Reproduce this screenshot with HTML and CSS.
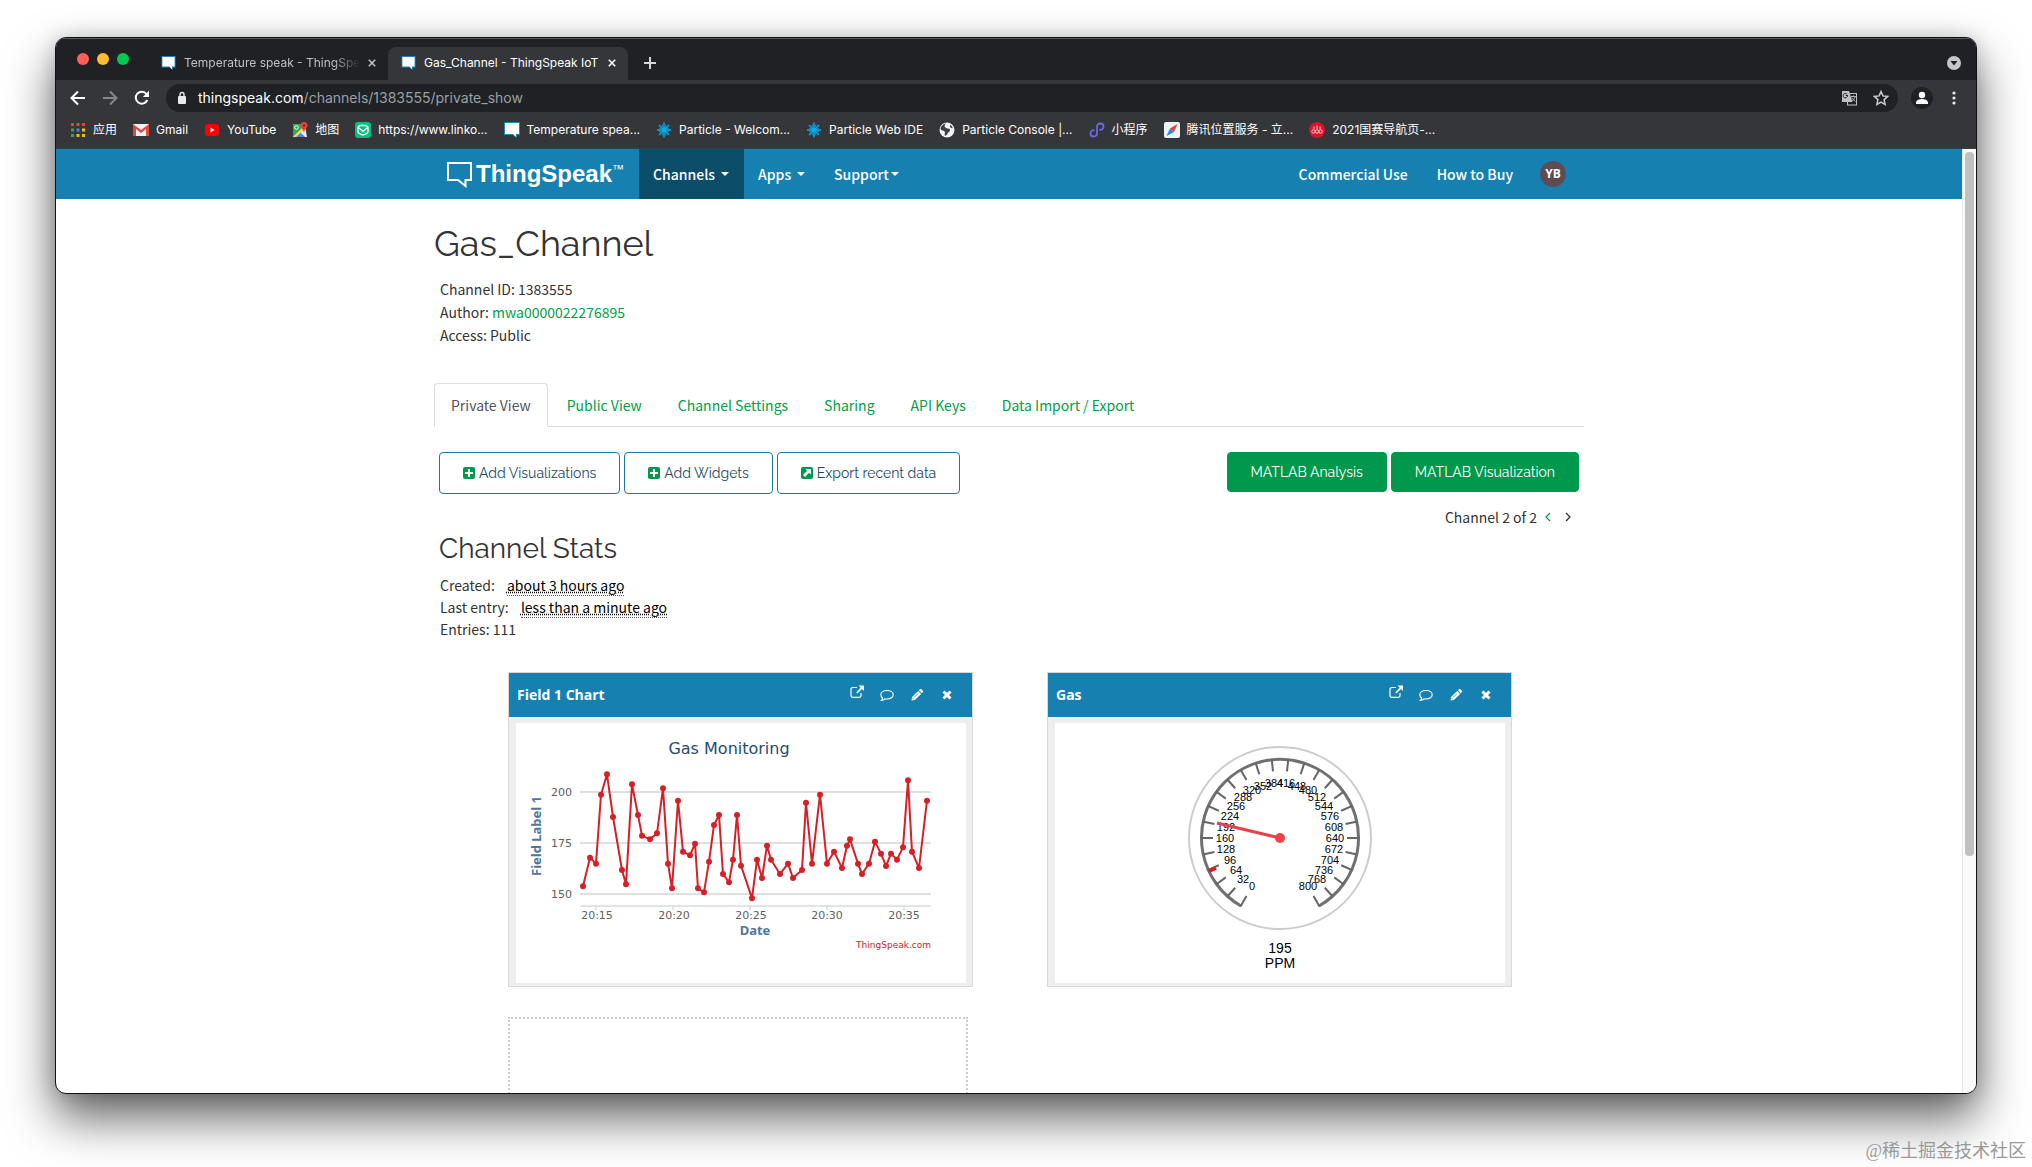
FILE: index.html
```html
<!DOCTYPE html>
<html lang="en">
<head>
<meta charset="utf-8">
<title>Gas_Channel - ThingSpeak IoT</title>
<link rel="stylesheet" href="styles.css">
</head>
<body>
<svg class="defs" aria-hidden="true">
  <symbol id="ts" viewBox="0 0 16 16"><path d="M0 0h16v13h-3v3l-4-3H0z" fill="#1b86b8"/><path d="M1 1h14v11h-3v3l-3-3H1z" fill="#fff"/></symbol>
  <symbol id="close" viewBox="0 0 10 10"><path d="M1 1l8 8M9 1L1 9" stroke="currentColor" stroke-width="2"/></symbol>
  <symbol id="spark" viewBox="0 0 16 16"><path d="M8 .5v15M1 8h14M3 3l10 10M13 3L3 13" stroke="#00aeef" stroke-width="1.400"/><path d="M6 2.500l4 11M10 2.500l-4 11M3 6l10 4M13 6L3 10" stroke="#00aeef" stroke-width=".8"/></symbol>
  <symbol id="plus-box" viewBox="0 0 12 12"><rect width="12" height="12" rx="2" fill="#00984c"/><path d="M6 2v8M2 6h8" stroke="#fff" stroke-width="2"/></symbol>
  <symbol id="arrow-box" viewBox="0 0 12 12"><rect width="12" height="12" rx="2" fill="#00984c"/><path d="M4.500 2H10v5.500L8.200 5.800 4 10 2 8l4.200-4.200z" fill="#fff"/></symbol>
  <symbol id="external" viewBox="0 0 14 14"><path d="M7 2.500H3A1.800 1.800 0 0 0 1 4.500v6A1.800 1.800 0 0 0 3 12.300h6a1.800 1.800 0 0 0 2-1.800V8" fill="none" stroke="currentColor" stroke-width="1.200"/><path d="M8.500.5H14V6l-2-1.900-4.600 4.500-1.200-1.200 4.500-4.600z" fill="currentColor"/></symbol>
  <symbol id="comment" viewBox="0 0 14 14"><path d="M7 2.500c3.500 0 6.200 1.800 6.200 4.200S10.500 11 7 11c-.7 0-1.400 0-2-.2-.9.900-2.100 1.500-3.600 1.600.7-.7 1.100-1.400 1.200-2.400C1.500 9.200.8 8 .8 6.700.8 4.300 3.500 2.500 7 2.500z" fill="none" stroke="currentColor" stroke-width="1.100"/></symbol>
  <symbol id="pencil" viewBox="0 0 14 14"><path d="M1.500 12.500l.6-3.400 6.100-6.100 2.900 2.900-6.200 6.100zM8.900 2.300l1-1c.5-.5 1-.5 1.500 0l1.400 1.400c.5.500.5 1 0 1.500l-1 1z" fill="currentColor"/><path d="M4 9.500l4-4M2.600 10.200l1.300 1.300" stroke="#1681b1" stroke-width=".8"/></symbol>
  <symbol id="times" viewBox="0 0 14 14"><path d="M3.500 3.500l7 7M10.500 3.500l-7 7" stroke="currentColor" stroke-width="3"/></symbol>
</svg>

<div class="window">
  <header class="chrome">
    <div class="tabstrip">
      <div class="lights"><i class="light red"></i><i class="light yellow"></i><i class="light green"></i></div>
      <div class="tab"><svg class="favicon"><use href="#ts"/></svg><span class="tab-title fade">Temperature speak - ThingSpeak IoT</span><button class="plain" aria-label="Close tab"><svg class="x"><use href="#close"/></svg></button></div>
      <div class="tab current"><svg class="favicon"><use href="#ts"/></svg><span class="tab-title">Gas_Channel - ThingSpeak IoT</span><button class="plain" aria-label="Close tab"><svg class="x"><use href="#close"/></svg></button></div>
      <button class="plain new-tab" aria-label="New tab"><svg width="12" height="12" viewBox="0 0 12 12"><path d="M6 0v12M0 6h12" stroke="#d5d7da" stroke-width="2"/></svg></button>
      <button class="plain tab-search" aria-label="Search tabs"><svg width="16" height="16" viewBox="0 0 16 16"><circle cx="8" cy="8" r="7" fill="#c4c7cb"/><path d="M4.500 6h7L8 10.500z" fill="#202124"/></svg></button>
    </div>
    <div class="toolbar">
      <button class="plain" aria-label="Back"><svg width="16" height="16" viewBox="0 0 16 16"><path d="M15 8H2M8 1.500L1.500 8 8 14.500" fill="none" stroke="#fff" stroke-width="2"/></svg></button>
      <button class="plain" aria-label="Forward"><svg width="16" height="16" viewBox="0 0 16 16"><path d="M1 8h13M8 1.500L14.500 8 8 14.500" fill="none" stroke="#85878a" stroke-width="2"/></svg></button>
      <button class="plain" aria-label="Reload"><svg width="16" height="16" viewBox="0 0 16 16"><path d="M13.300 10A6 6 0 1 1 12.500 4" fill="none" stroke="#fff" stroke-width="2"/><path d="M15 .8V7H8.800z" fill="#fff"/></svg></button>
      <div class="address">
        <svg width="10" height="14" viewBox="0 0 10 14"><rect x="1" y="5" width="8" height="8" rx="1" fill="#e8eaed"/><path d="M3 6V3.500a2 2 0 0 1 4 0V6" fill="none" stroke="#e8eaed" stroke-width="1.400"/></svg>
        <span class="url"><b>thingspeak.com</b>/channels/1383555/private_show</span>
        <button class="plain" aria-label="Translate"><svg width="16" height="16" viewBox="0 0 16 16"><rect x="6.500" y="3.500" width="9" height="11.500" fill="none" stroke="#bdc1c6"/><path d="M1 1h7l3.500 11H1z" fill="#bdc1c6"/><path d="M7 5.500H4.800M6.500 5.700A2.200 2.200 0 1 1 6 4.300" fill="none" stroke="#202124"/><path d="M10 6.500h5M12.500 5.500v1M14 7c-.5 2-2 3.500-3.500 4.500M11 7.500c.8 1.800 2 3 3.500 4" fill="none" stroke="#bdc1c6" stroke-width=".9"/></svg></button>
        <button class="plain" aria-label="Bookmark"><svg width="16" height="16" viewBox="0 0 16 16"><path d="M8 1.500l1.900 4.400 4.800.5-3.600 3.200 1 4.800L8 12l-4.100 2.400 1-4.800L1.300 6.400l4.800-.5z" fill="none" stroke="#c8cacd" stroke-width="1.500"/></svg></button>
      </div>
      <button class="plain profile" aria-label="Profile"><svg width="24" height="24" viewBox="0 0 24 24"><circle cx="12" cy="12" r="11" fill="#202124"/><circle cx="12" cy="9" r="3.200" fill="#fff"/><path d="M6 18v-1.500c0-2.500 4-3.500 6-3.500s6 1 6 3.500V18z" fill="#fff"/></svg></button>
      <button class="plain menu" aria-label="Menu"><svg width="4" height="16" viewBox="0 0 4 16"><g fill="#e8eaed"><circle cx="2" cy="3" r="1.600"/><circle cx="2" cy="8" r="1.600"/><circle cx="2" cy="13" r="1.600"/></g></svg></button>
    </div>
    <nav class="bookmarks">
      <a href="#"><svg viewBox="0 0 16 16"><g fill="#ea4335"><path d="M1 1h3v3H1zM6.500 1h3v3h-3zM12 1h3v3h-3z"/></g><path d="M1 6.500h3v3H1z" fill="#34a853"/><path d="M6.500 6.500h3v3h-3z" fill="#4285f4"/><path d="M12 6.500h3v3h-3zM6.500 12h3v3h-3zM12 12h3v3h-3z" fill="#fbbc04"/><path d="M1 12h3v3H1z" fill="#34a853"/></svg>应用</a>
      <a href="#"><svg viewBox="0 0 16 16"><path d="M0 2h16v12H0z" fill="#f2f2f2"/><path d="M0 14V2l8 6 8-6v12h-3V7l-5 4-5-4v7z" fill="#dd4b3e"/></svg>Gmail</a>
      <a href="#"><svg viewBox="0 0 16 16"><rect x="1" y="2" width="14" height="12" rx="3" fill="#f00"/><path d="M6.500 5.500v5l4-2.500z" fill="#fff"/></svg>YouTube</a>
      <a href="#"><svg viewBox="0 0 16 16"><path d="M1 2h13v13H1z" fill="#34a853"/><path d="M1 15L13 4l2 11z" fill="#e8eaed"/><path d="M3 15l5-5 5 5z" fill="#4285f4"/><path d="M1 15L12 4l2 2L4 15z" fill="#fbd75b"/><circle cx="4.500" cy="5.500" r="1.800" fill="none" stroke="#fff"/><path d="M12 0a3.500 3.500 0 0 1 3.500 3.500C15.500 6 12 8 12 11c0-3-3.500-5-3.500-7.500A3.500 3.500 0 0 1 12 0z" fill="#ea4335"/><circle cx="12" cy="3.500" r="1.200" fill="#8c1d18"/></svg>地图</a>
      <a href="#"><svg viewBox="0 0 16 16"><rect width="16" height="16" rx="3" fill="#07c07e"/><path d="M3 5l2-1.500h6L13 5v4.500c0 2-3 3-5 3.500-2-.5-5-1.500-5-3.500zM3.500 5.500L8 9.500l4.500-4" fill="none" stroke="#fff" stroke-width="1.300"/></svg>https://www.linko...</a>
      <a href="#"><svg><use href="#ts"/></svg>Temperature spea...</a>
      <a href="#"><svg><use href="#spark"/></svg>Particle - Welcom...</a>
      <a href="#"><svg><use href="#spark"/></svg>Particle Web IDE</a>
      <a href="#"><svg viewBox="0 0 16 16"><circle cx="8" cy="8" r="7.500" fill="#f1f3f4"/><path d="M7 1.500C5 3 5 5 7 6s4 0 4 2-2 2-2.500 3.500S7 14 6 13.500 7 10 5 9 1.500 8 1.500 7 3 2 7 1.500zM11 3c1 0 2 1 2.500 2.500S12 6 11 5z" fill="#3c4043"/></svg>Particle Console |...</a>
      <a href="#"><svg viewBox="0 0 16 16"><path d="M5.500 8.500C3 7.500 1.500 9.500 1.500 11.500s1.500 3 3 3c2.500 0 3.500-1.500 3.500-3.500V5c0-2 1-3.500 3.500-3.500 1.500 0 3 1 3 3s-1.500 4-4 3" fill="none" stroke="#6c67e8" stroke-width="1.800"/></svg>小程序</a>
      <a href="#"><svg viewBox="0 0 16 16"><rect width="16" height="16" rx="2" fill="#eaf3f8"/><path d="M13.500 2L10 10 6 6.500z" fill="#e8402f"/><path d="M2.500 14L6 6.500l4 3.500z" fill="#2389df"/></svg>腾讯位置服务 - 立...</a>
      <a href="#"><svg viewBox="0 0 16 16"><circle cx="8" cy="8" r="8" fill="#d9142b"/><g fill="none" stroke="#ffc9cf"><circle cx="4.500" cy="9.500" r="1.700"/><circle cx="8" cy="9.500" r="1.700"/><circle cx="11.500" cy="9.500" r="1.700"/><path d="M5 7V4.500M8 7V3.500M11 7V4.500"/></g></svg>2021国赛导航页-...</a>
    </nav>
  </header>

  <div class="viewport">
    <div class="page">
      <nav class="navbar">
        <div class="container nav-row">
          <a class="brand" href="#"><svg width="25" height="26" viewBox="0 0 25 26"><path d="M1 1h23v17h-5.500v6L11 18H1z" fill="none" stroke="#fff" stroke-width="2"/></svg><span>ThingSpeak<sup>™</sup></span></a>
          <a class="nav-link on" href="#">Channels <i class="caret"></i></a>
          <a class="nav-link" href="#">Apps <i class="caret"></i></a>
          <a class="nav-link tight" href="#">Support<i class="caret"></i></a>
          <a class="nav-link first-right" href="#">Commercial Use</a>
          <a class="nav-link" href="#">How to Buy</a>
          <a class="avatar" href="#">YB</a>
        </div>
      </nav>

      <main class="container">
        <h1>Gas_Channel</h1>
        <div class="meta">
          <div>Channel ID: 1383555</div>
          <div>Author: <a href="#">mwa0000022276895</a></div>
          <div>Access: Public</div>
        </div>

        <nav class="tabs">
          <a class="active" href="#">Private View</a>
          <a href="#">Public View</a>
          <a href="#">Channel Settings</a>
          <a href="#">Sharing</a>
          <a href="#">API Keys</a>
          <a href="#">Data Import / Export</a>
        </nav>

        <div class="actions">
          <button class="btn outline"><svg><use href="#plus-box"/></svg>Add Visualizations</button>
          <button class="btn outline"><svg><use href="#plus-box"/></svg>Add Widgets</button>
          <button class="btn outline"><svg><use href="#arrow-box"/></svg>Export recent data</button>
          <button class="btn solid push">MATLAB Analysis</button>
          <button class="btn solid">MATLAB Visualization</button>
        </div>
        <div class="pager">Channel 2 of 2
          <a href="#" aria-label="Previous channel"><svg width="6" height="10" viewBox="0 0 6 10"><path d="M5 1L1 5l4 4" fill="none" stroke="currentColor" stroke-width="1.300"/></svg></a>
          <span class="next"><svg width="6" height="10" viewBox="0 0 6 10"><path d="M1 1l4 4-4 4" fill="none" stroke="currentColor" stroke-width="1.300"/></svg></span>
        </div>

        <h2>Channel Stats</h2>
        <div class="stats">
          <div>Created: <abbr title="2021-05-08">about 3 hours ago</abbr></div>
          <div>Last entry: <abbr title="2021-05-08">less than a minute ago</abbr></div>
          <div>Entries: 111</div>
        </div>

        <div class="cards">
          <section class="card">
            <header><h3>Field 1 Chart</h3>
              <button class="plain raised" aria-label="Open"><svg><use href="#external"/></svg></button>
              <button class="plain" aria-label="Comment"><svg><use href="#comment"/></svg></button>
              <button class="plain" aria-label="Edit"><svg><use href="#pencil"/></svg></button>
              <button class="plain" aria-label="Remove"><svg><use href="#times"/></svg></button>
            </header>
            <div class="card-body">
              <svg class="chart" viewBox="0 0 450 260">
                <text class="c-title" x="213" y="31" text-anchor="middle">Gas Monitoring</text>
                <path class="grid" d="M64 69h351M64 120h351M64 171h351"/>
                <path class="axis" d="M64 183h351M80 183v4M157 183v4M234 183v4M311 183v4M388 183v4"/>
                <g class="c-label" text-anchor="end"><text x="56" y="73">200</text><text x="56" y="124">175</text><text x="56" y="175">150</text></g>
                <g class="c-label" text-anchor="middle"><text x="81" y="196">20:15</text><text x="158" y="196">20:20</text><text x="235" y="196">20:25</text><text x="311" y="196">20:30</text><text x="388" y="196">20:35</text></g>
                <text class="c-axis" x="239" y="212" text-anchor="middle">Date</text>
                <text class="c-axis" transform="translate(25 113) rotate(-90)" text-anchor="middle">Field Label 1</text>
                <text class="c-credit" x="415" y="225" text-anchor="end">ThingSpeak.com</text>
                <svg width="450" height="260" viewBox="0 0 1350 780">
                  <marker id="dot" markerUnits="userSpaceOnUse" markerWidth="20" markerHeight="20" refX="10" refY="10"><circle cx="10" cy="10" r="9" fill="#d62027"/></marker>
                  <polyline class="series" points="201,490 222,404 240,422 255,215 273,154 291,282 318,441 330,484 348,184 366,276 378,338 402,349 423,331 441,196 456,422 468,496 486,233 501,386 522,397 537,362 546,496 564,508 579,416 594,306 609,276 621,453 639,478 651,410 663,276 675,428 708,526 723,410 738,465 753,368 765,410 792,453 816,422 831,465 858,441 870,239 888,422 912,215 933,422 954,386 978,435 993,368 1002,349 1026,422 1038,453 1059,422 1077,356 1095,392 1110,429 1125,392 1143,410 1161,373 1176,172 1188,386 1209,435 1233,233"/>
                </svg>
              </svg>
            </div>
          </section>

          <section class="card">
            <header><h3>Gas</h3>
              <button class="plain raised" aria-label="Open"><svg><use href="#external"/></svg></button>
              <button class="plain" aria-label="Comment"><svg><use href="#comment"/></svg></button>
              <button class="plain" aria-label="Edit"><svg><use href="#pencil"/></svg></button>
              <button class="plain" aria-label="Remove"><svg><use href="#times"/></svg></button>
            </header>
            <div class="card-body">
              <svg class="chart" viewBox="0 0 450 260">
                <defs>
                  <path id="t" d="M0 67V79"/>
                  <g id="t5"><use href="#t"/><use href="#t" transform="rotate(12)"/><use href="#t" transform="rotate(24)"/><use href="#t" transform="rotate(36)"/><use href="#t" transform="rotate(48)"/></g>
                </defs>
                <circle cx="225" cy="115" r="91" fill="none" stroke="#ccc" stroke-width="2"/>
                <g transform="translate(225 115)">
                  <path d="M-39 68A78.500 78.500 0 1 1 39 68" fill="none" stroke="#707070" stroke-width="3"/>
                  <g stroke="#666" stroke-width="2"><use href="#t5" transform="rotate(30)"/><use href="#t5" transform="rotate(90)"/><use href="#t5" transform="rotate(150)"/><use href="#t5" transform="rotate(210)"/><use href="#t5" transform="rotate(270)"/><use href="#t" transform="rotate(330)"/></g>
                  <path d="M-71 33l7-3" stroke="#d81e2c" stroke-width="4"/>
                </g>
                <g class="g-label" text-anchor="middle">
                  <text x="197" y="167">0</text><text x="188" y="160">32</text><text x="181" y="151">64</text><text x="175" y="141">96</text><text x="171" y="130">128</text><text x="170" y="119">160</text><text x="171" y="108">192</text><text x="175" y="97">224</text><text x="181" y="87">256</text><text x="188" y="78">288</text><text x="197" y="71">320</text><text x="208" y="67">352</text><text x="219" y="64">384</text><text x="231" y="64">416</text><text x="242" y="67">448</text><text x="253" y="71">480</text><text x="262" y="78">512</text><text x="269" y="87">544</text><text x="275" y="97">576</text><text x="279" y="108">608</text><text x="280" y="119">640</text><text x="279" y="130">672</text><text x="275" y="141">704</text><text x="269" y="151">736</text><text x="262" y="160">768</text><text x="253" y="167">800</text>
                </g>
                <path d="M162 100l63 15" stroke="#e8414a" stroke-width="3"/><circle cx="225" cy="115" r="5" fill="#f04048"/>
                <g class="g-value" text-anchor="middle"><text x="225" y="230">195</text><text x="225" y="245">PPM</text></g>
              </svg>
            </div>
          </section>
          <div class="drop"></div>
        </div>
      </main>
    </div>
    <div class="scrollbar"><div class="thumb"></div></div>
  </div>
</div>
<div class="watermark">@稀土掘金技术社区</div>
</body>
</html>
```
FILE: styles.css
```css
* { box-sizing: border-box; }
body {
  margin: 0;
  height: 100vh;
  overflow: hidden;
  padding: 37px 55px 73px;
  background: #fff;
  color: #333;
  font: 14px/24px "Noto Sans CJK SC", sans-serif;
}
.defs { display: none; }
svg { display: block; flex: none; }
a { color: #00a046; text-decoration: none; }
.plain { border: 0; padding: 0; background: none; color: inherit; }

/* Browser window */
.window {
  display: flex;
  flex-direction: column;
  height: 100%;
  overflow: hidden;
  border: 1px solid #111;
  border-radius: 11px;
  background: #fff;
  box-shadow: 0 24px 48px rgba(0, 0, 0, .62), 0 0 20px rgba(0, 0, 0, .16);
}
.chrome {
  flex: none;
  background: #35363a;
  border-bottom: 1px solid #26434f;
  color: #fff;
  font: 12px/16px Inter, "Noto Sans CJK SC", sans-serif;
}
.tabstrip {
  display: flex;
  height: 42px;
  padding: 8px 14px 0 21px;
  border-top: 1px solid #5a5c5e;
  background: #202124;
}
.lights { display: flex; gap: 8px; margin: 6px 19px 0 0; }
.light { width: 12px; height: 12px; border-radius: 50%; }
.red { background: #ff5f57; }
.yellow { background: #febc2e; }
.green { background: #00c853; }
.tab {
  display: flex;
  align-items: center;
  gap: 8px;
  width: 240px;
  padding: 0 12px 2px 13px;
  border-radius: 8px 8px 0 0;
  color: #bdc1c6;
}
.tab.current { background: #35363a; color: #fff; }
.favicon { width: 15px; height: 14px; }
.tab-title { flex: 1; overflow: hidden; white-space: nowrap; }
.fade { -webkit-mask-image: linear-gradient(90deg, #000 85%, transparent); mask-image: linear-gradient(90deg, #000 85%, transparent); }
.x { width: 8px; height: 8px; }
.new-tab { margin-left: 16px; padding-bottom: 2px; }
.tab-search { margin-left: auto; padding-bottom: 2px; }
.toolbar {
  display: flex;
  align-items: center;
  gap: 16px;
  height: 36px;
  padding: 0 20px 0 14px;
}
.address {
  display: flex;
  flex: 1;
  align-items: center;
  gap: 16px;
  height: 28px;
  margin-right: -4px;
  padding: 0 9px 0 11px;
  border-radius: 14px;
  background: #202124;
}
.url { flex: 1; margin-left: -5px; font-size: 14px; color: #9aa0a6; }
.url b { font-weight: 400; color: #fff; }
.menu { margin-left: 2px; }
.bookmarks {
  display: flex;
  align-items: center;
  gap: 16px;
  height: 32px;
  padding: 0 14px 4px;
}
.bookmarks a { display: flex; align-items: center; gap: 7px; color: #fff; white-space: nowrap; }
.bookmarks svg { width: 16px; height: 16px; }

/* Page viewport */
.viewport { display: flex; flex: 1; min-height: 0; overflow: hidden; }
.page { flex: 1; min-width: 0; overflow: hidden; }
.scrollbar { width: 14px; padding: 3px 2px; border-left: 1px solid #e8e8e8; background: #fafafa; }
.thumb { height: 75%; border-radius: 4px; background: #c1c1c1; }
.container { max-width: 1150px; margin: 0 auto; }

.navbar { background: #1681b1; }
.nav-row { display: flex; align-items: stretch; height: 50px; padding-left: 13px; }
.brand { display: flex; align-items: center; gap: 4px; width: 192px; color: #fff; font: bold 24px/24px "Liberation Sans", sans-serif; }
.brand svg { margin-top: 1px; }
.brand sup { font-size: 12px; font-weight: 400; line-height: 12px; }
.nav-link { display: flex; align-items: center; gap: 6px; padding: 0 15px 0 14px; color: #fff; font-weight: 500; }
.nav-link.on { background: #0c4d6a; }
.nav-link.tight { gap: 2px; }
.first-right { margin-left: auto; }
.caret { border: 4px solid transparent; border-top-color: #fff; border-bottom: 0; }
.avatar { align-self: center; width: 26px; height: 26px; margin: 0 18px 0 12px; border-radius: 50%; background: #5f4b52; color: #fff; font: bold 12px/26px "Open Sans", sans-serif; text-align: center; }

h1, h2 { margin: 0; font-family: Raleway, Lato, sans-serif; font-weight: 400; }
h1 { padding: 22px 0 0; font-size: 36px; line-height: 44px; }
.meta { padding: 13px 6px 0; line-height: 23px; }

.tabs { display: flex; gap: 2px; margin-top: 36px; border-bottom: 1px solid #ddd; }
.tabs a { padding: 9px 16px 8px; border: 1px solid transparent; }
.tabs .active { margin-bottom: -1px; border-color: #ddd; border-bottom-color: #fff; border-radius: 4px 4px 0 0; background: #fff; color: #555; }

.actions { display: flex; align-items: flex-start; gap: 4px; padding: 25px 5px 0; }
.btn { display: flex; align-items: center; gap: 4px; height: 42px; padding: 0 23px; border: 1px solid #1a78a4; border-radius: 4px; background: #fff; color: #1a4a63; font: 14px/20px Raleway, Lato, sans-serif; }
.btn svg { width: 12px; height: 12px; }
.solid { height: 40px; border-color: #00984c; background: #00984c; color: #fff; }
.push { margin-left: auto; }
.pager { display: flex; align-items: center; justify-content: flex-end; gap: 8px; padding: 11px 13px 0; }
.next { margin-left: 6px; }

h2 { padding: 2px 5px 0; font-size: 28px; line-height: 36px; }
.stats { padding: 7px 6px 0; line-height: 22px; }
.stats abbr { margin-left: 9px; border-bottom: 1px dotted #555; color: #000; text-decoration: underline dotted; }

.cards { display: grid; grid-template-columns: 1fr 1fr; gap: 30px 74px; padding: 32px 72px 0 74px; }
.card { border: 1px solid #d8d8d8; background: #eee; }
.card header { display: flex; align-items: center; gap: 16px; height: 44px; padding: 0 18px 0 8px; background: #1681b1; color: #fff; }
.card h3 { flex: 1; margin: 0; font: bold 14px/20px "Open Sans", sans-serif; }
.card header svg { width: 14px; height: 14px; }
.raised { padding-bottom: 6px; }
.card-body { margin: 6px 6px 3px 7px; background: #fff; }
.chart { width: 100%; height: 260px; }
.grid, .axis { fill: none; stroke: #c0c0c0; }
.axis { stroke: #c0c8d8; }
.series { fill: none; stroke: #d62027; stroke-width: 6; marker-start: url(#dot); marker-mid: url(#dot); marker-end: url(#dot); }
.c-title { font: 16px "DejaVu Sans", sans-serif; fill: #274b6d; }
.c-label { font: 11px "DejaVu Sans", sans-serif; fill: #606060; }
.c-axis { font: bold 13px "Noto Sans", sans-serif; fill: #4d759e; }
.c-credit { font: 9px "DejaVu Sans", sans-serif; fill: #d62027; }
.g-label { font: 11px "Liberation Sans", sans-serif; fill: #000; }
.g-value { font: 14px "Liberation Sans", sans-serif; fill: #000; }
.drop { height: 320px; margin-right: 5px; border: 2px dotted #ccc; }

.watermark { position: absolute; right: 6px; bottom: 4px; color: #999; font: 18px/24px "Liberation Serif", "Noto Sans CJK SC", serif; }
```
